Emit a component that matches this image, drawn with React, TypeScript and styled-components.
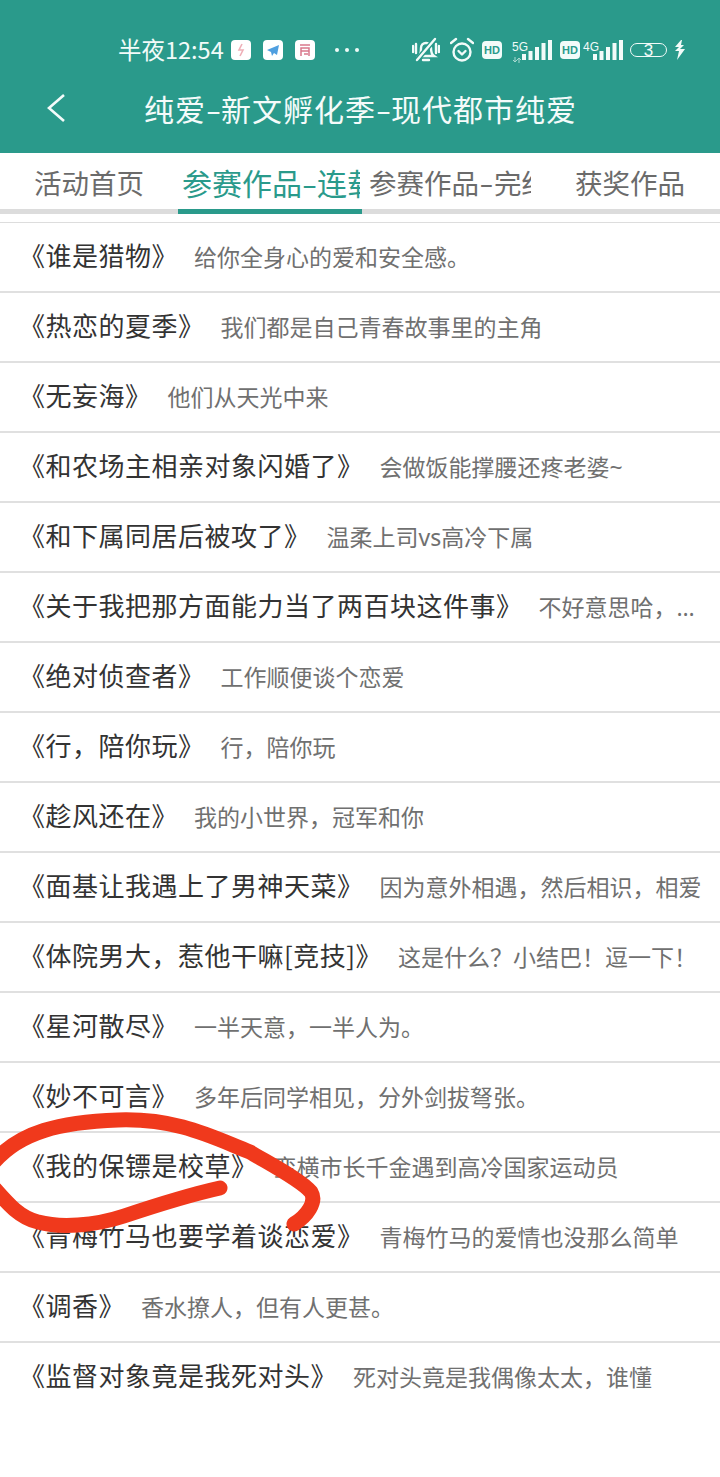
import styled, { createGlobalStyle } from "styled-components";

const TEAL = "#2a9a8b";
const FONT = `"Noto Sans CJK SC", "Noto Sans", sans-serif`;

const GlobalStyle = createGlobalStyle`
  html, body {
    margin: 0;
    padding: 0;
    background: #fff;
    font-family: ${FONT};
  }
`;

const S = {
  Page: styled.div`
    position: relative;
    width: 720px;
    height: 1477px;
    overflow: hidden;
    background: #fff;
  `,
  Header: styled.header`
    height: 153px;
    background: ${TEAL};
    box-sizing: border-box;
    padding-top: 32px;
  `,
  StatusBar: styled.div`
    display: flex;
    align-items: center;
    height: 36px;
    padding-left: 118px;
    color: #f2fbf9;
  `,
  Clock: styled.span`
    font-size: 23.5px;
    line-height: 34px;
    height: 36px;
    width: 113px;
    white-space: nowrap;
  `,
  AppBadges: styled.div`
    display: flex;
    gap: 12px;
    width: 100px;
  `,
  AppBadge: styled.span`
    display: flex;
    align-items: center;
    justify-content: center;
    width: 20px;
    height: 20px;
    border-radius: 4px;
    background: #fff;
  `,
  Dots: styled.div`
    display: flex;
    gap: 6px;
    width: 77px;
    margin-left: 4px;
  `,
  Dot: styled.span`
    width: 4px;
    height: 4px;
    border-radius: 50%;
    background: #eef9f7;
  `,
  StatusIcons: styled.div`
    display: flex;
    align-items: center;
  `,
  IconSlot: styled.span<{ $left: number }>`
    display: flex;
    margin-left: ${(p) => p.$left}px;
  `,
  HdBadge: styled.span<{ $left: number }>`
    display: flex;
    align-items: center;
    justify-content: center;
    width: 20px;
    height: 18px;
    margin-left: ${(p) => p.$left}px;
    border-radius: 4px;
    background: #f2fbf9;
    color: ${TEAL};
    font-family: "Liberation Sans", sans-serif;
    font-size: 11px;
    font-weight: 700;
  `,
  NetLabel: styled.span<{ $left: number }>`
    align-self: flex-start;
    margin: 6px 0 0 ${(p) => p.$left}px;
    width: 10px;
    overflow: visible;
    font-family: "Liberation Sans", sans-serif;
    font-size: 12px;
    line-height: 12px;
    color: #f2fbf9;
  `,
  Battery: styled.span`
    display: flex;
    align-items: center;
    justify-content: center;
    width: 37px;
    height: 14px;
    margin-left: 7px;
    box-sizing: border-box;
    border: 1.5px solid #f2fbf9;
    border-radius: 7px;
    font-family: "Liberation Sans", sans-serif;
    font-size: 17px;
    line-height: 11px;
    color: #f2fbf9;
  `,
  NavBar: styled.div`
    display: flex;
    align-items: center;
    height: 60px;
    margin-top: 10px;
    margin-left: 46px;
  `,
  BackButton: styled.span`
    display: flex;
    width: 98px;
  `,
  Title: styled.h1`
    margin: 0;
    font-size: 30px;
    letter-spacing: 1px;
    font-weight: 400;
    line-height: 40px;
    color: #f4fbfa;
    white-space: nowrap;
  `,
  Dash: styled.span<{ $width: number }>`
    display: inline-block;
    width: ${(p) => p.$width}px;
    text-align: center;
    letter-spacing: 0;
    transform: scaleX(1.5);
  `,
  TabBar: styled.nav`
    display: flex;
    height: 61px;
    box-sizing: border-box;
    border-bottom: 5px solid #dcdcdc;
  `,
  Tab: styled.div<{ $width: number; $pad: number; $active?: boolean }>`
    flex: none;
    width: ${(p) => p.$width}px;
    height: 61px;
    box-sizing: border-box;
    padding-left: ${(p) => p.$pad}px;
    border-bottom: 5px solid ${(p) => (p.$active ? TEAL : "transparent")};
    color: ${(p) => (p.$active ? TEAL : "#6b6b6b")};
  `,
  TabLabel: styled.div<{ $clip: number; $active?: boolean }>`
    width: ${(p) => p.$clip}px;
    overflow: hidden;
    white-space: nowrap;
    font-size: ${(p) => (p.$active ? 30 : 27.5)}px;
    line-height: 58px;
  `,
  List: styled.ul`
    list-style: none;
    margin: 8px 0 0;
    padding: 0;
    border-top: 1px solid #ddd;
  `,
  Row: styled.li<{ $last?: boolean }>`
    height: 70px;
    box-sizing: border-box;
    padding-left: 19px;
    white-space: nowrap;
    line-height: 64px;
    border-bottom: ${(p) => (p.$last ? "none" : "2px solid #e0e0e0")};
  `,
  BookTitle: styled.span`
    font-size: 26px;
    letter-spacing: 0.5px;
    color: #333;
    margin-right: 16px;
  `,
  Blurb: styled.span`
    font-family: "Noto Sans", "Noto Sans CJK SC", sans-serif;
    font-size: 23px;
    color: #707070;
  `,
  Scribble: styled.svg`
    position: absolute;
    left: 0;
    top: 1100px;
    pointer-events: none;
  `,
};

const BOOKS = [
  ["《谁是猎物》", "给你全身心的爱和安全感。"],
  ["《热恋的夏季》", "我们都是自己青春故事里的主角"],
  ["《无妄海》", "他们从天光中来"],
  ["《和农场主相亲对象闪婚了》", "会做饭能撑腰还疼老婆~"],
  ["《和下属同居后被攻了》", "温柔上司vs高冷下属"],
  ["《关于我把那方面能力当了两百块这件事》", "不好意思哈，…"],
  ["《绝对侦查者》", "工作顺便谈个恋爱"],
  ["《行，陪你玩》", "行，陪你玩"],
  ["《趁风还在》", "我的小世界，冠军和你"],
  ["《面基让我遇上了男神天菜》", "因为意外相遇，然后相识，相爱"],
  ["《体院男大，惹他干嘛[竞技]》", "这是什么？小结巴！逗一下！"],
  ["《星河散尽》", "一半天意，一半人为。"],
  ["《妙不可言》", "多年后同学相见，分外剑拔弩张。"],
  ["《我的保镖是校草》", "蛮横市长千金遇到高冷国家运动员"],
  ["《青梅竹马也要学着谈恋爱》", "青梅竹马的爱情也没那么简单"],
  ["《调香》", "香水撩人，但有人更甚。"],
  ["《监督对象竟是我死对头》", "死对头竟是我偶像太太，谁懂"],
];

const SignalBars = () => (
  <svg width="30" height="20" viewBox="0 0 30 20" fill="#f2fbf9">
    <rect x="0" y="14" width="4" height="6" />
    <rect x="6.5" y="11" width="4" height="9" />
    <rect x="13" y="7" width="4" height="13" />
    <rect x="19.5" y="3" width="4" height="17" />
    <rect x="26" y="0" width="4" height="20" />
  </svg>
);

const DataArrows = () => (
  <svg width="10" height="6" viewBox="0 0 10 6" fill="none" stroke="#a9d8d0" strokeWidth="1">
    <path d="M3 0v5M1 3l2 2 2-2M7 6V1M5 3l2-2 2 2" />
  </svg>
);

const MutedBell = () => (
  <svg width="28" height="28" viewBox="0 0 28 28" fill="none" stroke="#f2fbf9" strokeWidth="2.4" strokeLinecap="round">
    <path d="M7 20c2-2 2-5 2-8 0-3 2-5 5-5s5 2 5 5c0 3 0 6 3 8z" />
    <path d="M11 24h6" />
    <path d="M1 10v6M4 8v9M24 8v9M27 10v6" />
    <path d="M5 24 23 3" stroke={TEAL} strokeWidth="5" />
    <path d="M5 24 23 3" />
  </svg>
);

const AlarmClock = () => (
  <svg width="24" height="26" viewBox="0 0 24 26" fill="none" stroke="#f2fbf9" strokeWidth="2.4" strokeLinecap="round" strokeLinejoin="round">
    <circle cx="12" cy="15" r="8.5" />
    <path d="M1 6l5-4M23 6l-5-4" />
    <path d="M8.5 14l3.5 3.5 3.5-3.5" />
  </svg>
);

const Bolt = () => (
  <svg width="11" height="20" viewBox="0 0 11 20" fill="#f2fbf9">
    <path d="M7 0 1 7h4l-4 4h4l-2 9 8-11H6l4-4H7l1-5z" />
  </svg>
);

const App = () => (
  <S.Page>
    <GlobalStyle />
    <S.Header>
      <S.StatusBar>
        <S.Clock>半夜12:54</S.Clock>
        <S.AppBadges>
          <S.AppBadge>
            <svg width="12" height="14" viewBox="0 0 12 14" fill="none" stroke="#eeb0b8" strokeWidth="1.6">
              <path d="M7 1 4 7h4l-3 6" />
            </svg>
          </S.AppBadge>
          <S.AppBadge>
            <svg width="14" height="14" viewBox="0 0 14 14" fill="#4f9fe0">
              <path d="M13 2 1 7l4 2 1 4 2-3 3 2z" />
            </svg>
          </S.AppBadge>
          <S.AppBadge>
            <svg width="12" height="14" viewBox="0 0 12 14" fill="none" stroke="#d9788c" strokeWidth="1.5">
              <path d="M1 2h10M2 5h8v3H2zM2 8v5M10 8v5M5 11h4" />
            </svg>
          </S.AppBadge>
        </S.AppBadges>
        <S.Dots>
          <S.Dot />
          <S.Dot />
          <S.Dot />
        </S.Dots>
        <S.StatusIcons>
          <MutedBell />
          <S.IconSlot $left={10}>
            <AlarmClock />
          </S.IconSlot>
          <S.HdBadge $left={8}>HD</S.HdBadge>
          <S.NetLabel $left={10}>
            5G
            <DataArrows />
          </S.NetLabel>
          <SignalBars />
          <S.HdBadge $left={8}>HD</S.HdBadge>
          <S.NetLabel $left={3}>4G</S.NetLabel>
          <SignalBars />
          <S.Battery>3</S.Battery>
          <S.IconSlot $left={7}>
            <Bolt />
          </S.IconSlot>
        </S.StatusIcons>
      </S.StatusBar>
      <S.NavBar>
        <S.BackButton>
          <svg width="22" height="30" viewBox="0 0 22 30" fill="none" stroke="#f4fbfa" strokeWidth="2.6">
            <path d="M18 2 3 15l15 13" />
          </svg>
        </S.BackButton>
        <S.Title>
          纯爱<S.Dash $width={15}>-</S.Dash>新文孵化季<S.Dash $width={15}>-</S.Dash>现代都市纯爱
        </S.Title>
      </S.NavBar>
    </S.Header>
    <S.TabBar>
      <S.Tab $width={178} $pad={34}>
        <S.TabLabel $clip={120}>活动首页</S.TabLabel>
      </S.Tab>
      <S.Tab $width={184} $pad={4} $active>
        <S.TabLabel $clip={178} $active>
          参赛作品<S.Dash $width={15}>-</S.Dash>连载
        </S.TabLabel>
      </S.Tab>
      <S.Tab $width={213} $pad={7}>
        <S.TabLabel $clip={162}>
          参赛作品<S.Dash $width={15}>-</S.Dash>完结
        </S.TabLabel>
      </S.Tab>
      <S.Tab $width={145} $pad={0}>
        <S.TabLabel $clip={120}>获奖作品</S.TabLabel>
      </S.Tab>
    </S.TabBar>
    <S.List>
      {BOOKS.map(([title, desc], i) => (
        <S.Row key={title} $last={i === BOOKS.length - 1}>
          <S.BookTitle>{title}</S.BookTitle>
          <S.Blurb>{desc}</S.Blurb>
        </S.Row>
      ))}
    </S.List>
    <S.Scribble width="340" height="140" viewBox="0 0 340 140" fill="none" stroke="#f0391c" strokeWidth="15" strokeLinecap="round" strokeLinejoin="round">
      <path d="M-6 62C20 32 60 22 118 20c60-2 96 18 132 32 20 12 51 28 61 40 6 10-4 24-17 32" />
      <path d="M220 88c-36 8-66 18-96 28-30 10-64 12-86 6C20 118 8 104-6 88" />
    </S.Scribble>
  </S.Page>
);

export default App;
